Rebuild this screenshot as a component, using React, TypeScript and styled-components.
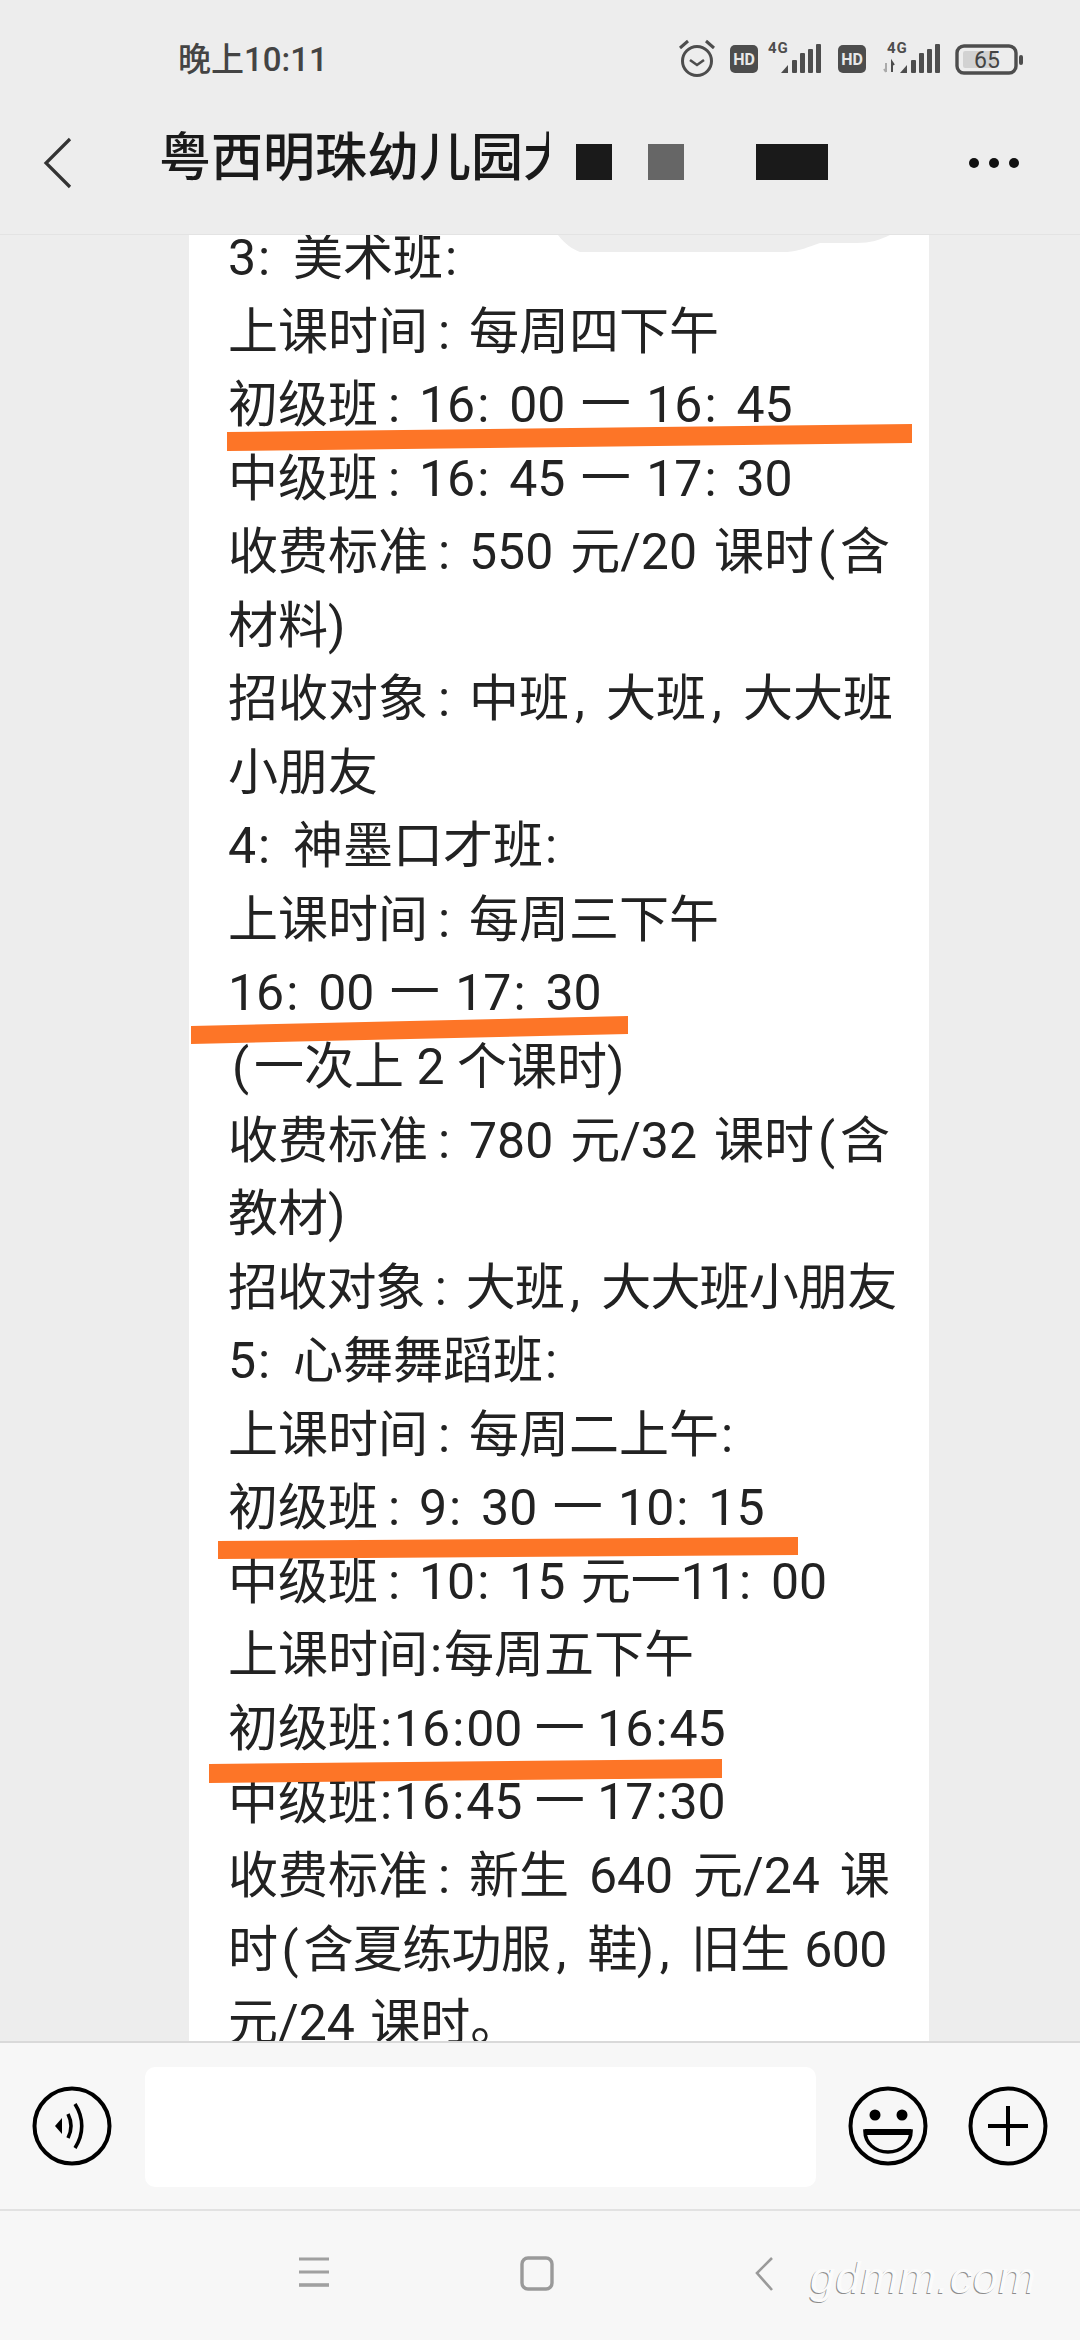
import styled, { createGlobalStyle } from 'styled-components';

const GlobalStyle = createGlobalStyle`
  html, body {
    margin: 0;
    padding: 0;
    background: #ededed;
  }
  * {
    box-sizing: border-box;
  }
`;

const Screen = styled.div`
  width: 1080px;
  height: 2340px;
  display: flex;
  flex-direction: column;
  background: #ededed;
  overflow: hidden;
  font-family: Roboto, 'Noto Sans CJK SC', sans-serif;
`;

const Top = styled.header`
  height: 235px;
  flex: none;
  border-bottom: 1px solid #e3e3e3;
  background: #ededed;
`;

const StatusBar = styled.div`
  height: 122px;
  padding: 38px 55px 0 178px;
  display: flex;
  justify-content: space-between;
`;

const Time = styled.div`
  font-size: 33px;
  line-height: 44px;
  font-weight: 500;
  color: #444;
`;

const StatusIcons = styled.div`
  display: flex;
  align-items: flex-start;
  height: 48px;
`;

const Slot = styled.div<{ $gap?: number; $top?: number }>`
  display: flex;
  margin-left: ${({ $gap }) => $gap ?? 0}px;
  margin-top: ${({ $top }) => $top ?? 0}px;
`;

const TitleBar = styled.div`
  height: 112px;
  padding: 0 61px 0 42px;
  display: flex;
  align-items: flex-start;
`;

const BackIcon = styled.svg`
  flex: none;
  margin-top: 14px;
`;

const MoreIcon = styled.svg`
  flex: none;
  margin-top: 35px;
`;

const Title = styled.h1`
  margin: 3px 0 0 85px;
  width: 390px;
  height: 72px;
  overflow: hidden;
  white-space: nowrap;
  font-size: 52px;
  line-height: 68px;
  font-weight: 500;
  color: #1a1a1a;
`;

const Redactions = styled.div`
  margin: 22px 0 0 27px;
  display: flex;
  flex: 1;
`;

const Redaction = styled.span<{ $w: number; $gap: number; $grey?: boolean }>`
  width: ${({ $w }) => $w}px;
  height: 36px;
  margin-right: ${({ $gap }) => $gap}px;
  background: ${({ $grey }) => ($grey ? '#666' : '#1a1a1a')};
`;

const Content = styled.main`
  position: relative;
  flex: 1;
  min-height: 0;
  overflow: hidden;
`;

const Sheet = styled.section`
  width: 740px;
  height: 100%;
  margin-left: 189px;
  padding-left: 39px;
  background: #fff;
  overflow: hidden;
`;

const Lines = styled.div`
  margin-top: -13px;
`;

const Line = styled.div<{ $word?: number; $letter?: number }>`
  height: 73.55px;
  line-height: 73.55px;
  font-size: 50px;
  word-spacing: ${({ $word }) => $word ?? 3}px;
  letter-spacing: ${({ $letter }) => $letter ?? 0}px;
  color: #222;
  white-space: nowrap;
`;

// the source text sets its punctuation wider than the font does
const Punct = styled.span<{ $w: number; $pad: number }>`
  display: inline-block;
  width: ${({ $w }) => $w}px;
  padding-left: ${({ $pad }) => $pad}px;
`;

const Overlay = styled.svg`
  position: absolute;
  left: 0;
  top: 0;
  pointer-events: none;
`;

const Composer = styled.div`
  height: 170px;
  flex: none;
  padding: 24px 32px 0 32px;
  display: flex;
  align-items: flex-start;
  background: #f7f7f7;
  border-top: 2px solid #d9d9d9;
  border-bottom: 2px solid #e2e2e2;
`;

const RoundIcon = styled.svg<{ $gap?: number }>`
  flex: none;
  margin-top: 19px;
  margin-left: ${({ $gap }) => $gap ?? 0}px;
`;

const Input = styled.div`
  width: 671px;
  height: 120px;
  margin-left: 33px;
  background: #fff;
  border-radius: 10px;
`;

const NavBar = styled.nav`
  position: relative;
  height: 129px;
  flex: none;
  background: #f7f7f7;
  display: flex;
  align-items: flex-start;
  padding: 45px 0 0 297px;
`;

const Watermark = styled.div`
  position: absolute;
  left: 810px;
  top: 39px;
  font-family: 'Liberation Sans', sans-serif;
  font-style: italic;
  font-size: 45px;
  line-height: 56px;
  letter-spacing: 0.5px;
  color: #fbfbfb;
  text-shadow: -1px 1px 0 #8d8d8d;
`;

const NavIcon = styled.svg<{ $gap?: number }>`
  flex: none;
  margin-left: ${({ $gap }) => $gap ?? 0}px;
`;

const textLines: { text: string; word?: number; letter?: number }[] = [
  { text: '3：美术班:' },
  { text: '上课时间：每周四下午' },
  { text: '初级班：16：00 一 16：45' },
  { text: '中级班：16：45 一 17：30' },
  { text: '收费标准：550 元/20 课时(含', word: 4.5 },
  { text: '材料)' },
  { text: '招收对象：中班，大班，大大班' },
  { text: '小朋友' },
  { text: '4：神墨口才班:' },
  { text: '上课时间：每周三下午' },
  { text: '16：00 一 17：30' },
  { text: '(一次上 2 个课时)', word: 0 },
  { text: '收费标准：780 元/32 课时(含', word: 4.5 },
  { text: '教材)' },
  { text: '招收对象：大班，大大班小朋友', letter: -0.8 },
  { text: '5：心舞舞蹈班:' },
  { text: '上课时间：每周二上午:' },
  { text: '初级班：9：30 一 10：15' },
  { text: '中级班：10：15 元一11：00' },
  { text: '上课时间:每周五下午' },
  { text: '初级班:16:00 一 16:45', word: 0 },
  { text: '中级班:16:45 一 17:30', word: 0 },
  { text: '收费标准：新生 640 元/24 课', word: 7.5 },
  { text: '时(含夏练功服，鞋)，旧生 600', letter: -0.6 },
  { text: '元/24 课时。' },
];

// orange marker strokes, in coordinates of the content area (y - 235)
const strokes = [
  '227,197 912,189 912,208 227,216',
  '191,791 628,781 628,799 191,809',
  '218,1306 798,1302 798,1320 218,1324',
  '209,1529 722,1524 722,1543 209,1548',
];

const renderLine = (line: string) =>
  line.split(/([：，:(])/).map((part, i, parts) => {
    if (part === '：') {
      const afterDigit = /\d$/.test(parts[i - 1]);
      const beforeDigit = /^\d/.test(parts[i + 1]);
      const width = afterDigit ? (beforeDigit ? 34 : 37) : 41;
      return (
        <Punct key={i} $w={width} $pad={afterDigit ? 2 : 10}>
          :
        </Punct>
      );
    }
    if (part === '，') {
      return (
        <Punct key={i} $w={37} $pad={6}>
          ,
        </Punct>
      );
    }
    if (part === ':') {
      return (
        <Punct key={i} $w={16} $pad={2}>
          :
        </Punct>
      );
    }
    if (part === '(') {
      return (
        <Punct key={i} $w={26} $pad={4}>
          (
        </Punct>
      );
    }
    return part;
  });

const Alarm = () => (
  <svg width="44" height="40" viewBox="0 0 44 40" fill="none" stroke="#4d4d4d">
    <circle cx="22" cy="23" r="14.5" strokeWidth="3" />
    <path d="M15 22l7 5 7-5" strokeWidth="2.6" />
    <path d="M5 10l8-7M39 10l-8-7" strokeWidth="3" />
  </svg>
);

const HdBadge = () => (
  <svg width="28" height="28" viewBox="0 0 28 28">
    <rect width="28" height="28" rx="5" fill="#4d4d4d" />
    <text x="14" y="20" textAnchor="middle" fontFamily="Roboto" fontWeight="700" fontSize="16" fill="#e8e8e8">
      HD
    </text>
  </svg>
);

const Signal = ({ arrows }: { arrows?: boolean }) => (
  <svg width={arrows ? 58 : 54} height="40" viewBox={arrows ? '0 0 58 40' : '0 0 54 40'}>
    <text
      x={arrows ? 4 : 0}
      y="15"
      fontFamily="Roboto"
      fontWeight="700"
      fontSize="15"
      letterSpacing="1"
      fill="#4d4d4d"
    >
      4G
    </text>
    {arrows && (
      <g fill="none" strokeWidth="2">
        <path d="M3 25v9M1 31l2 3" stroke="#aaa" />
        <path d="M9 34v-10l2 3" stroke="#4d4d4d" />
      </g>
    )}
    <g fill="#4d4d4d" transform={arrows ? 'translate(4 0)' : undefined}>
      <path d="M13 35l7-8v8z" />
      <rect x="24" y="22" width="5" height="13" rx="1" />
      <rect x="32" y="15" width="5" height="20" rx="1" />
      <rect x="40" y="11" width="5" height="24" rx="1" />
      <rect x="48" y="6" width="5" height="29" rx="1" />
    </g>
  </svg>
);

const Battery = () => (
  <svg width="70" height="32" viewBox="0 0 70 32">
    <rect x="2" y="2" width="59" height="27" rx="7" fill="none" stroke="#4d4d4d" strokeWidth="3.4" />
    <rect x="8" y="7" width="33" height="17" rx="2" fill="#d2d2d2" />
    <rect x="64" y="11" width="4" height="10" rx="2" fill="#4d4d4d" />
    <text x="32" y="24" textAnchor="middle" fontFamily="Roboto" fontSize="23" fill="#444">
      65
    </text>
  </svg>
);

export default function App() {
  return (
    <Screen>
      <GlobalStyle />
      <Top>
        <StatusBar>
          <Time>晚上10:11</Time>
          <StatusIcons>
            <Slot>
              <Alarm />
            </Slot>
            <Slot $gap={11} $top={7}>
              <HdBadge />
            </Slot>
            <Slot $gap={10}>
              <Signal />
            </Slot>
            <Slot $gap={16} $top={7}>
              <HdBadge />
            </Slot>
            <Slot $gap={17}>
              <Signal arrows />
            </Slot>
            <Slot $gap={14} $top={6}>
              <Battery />
            </Slot>
          </StatusIcons>
        </StatusBar>
        <TitleBar>
          <BackIcon width="32" height="54" viewBox="0 0 32 54" fill="none" stroke="#333" strokeWidth="3.2">
            <path d="M28 3L4 27l24 24" />
          </BackIcon>
          <Title>粤西明珠幼儿园大</Title>
          <Redactions>
            <Redaction $w={36} $gap={36} />
            <Redaction $w={36} $gap={72} $grey />
            <Redaction $w={72} $gap={0} />
          </Redactions>
          <MoreIcon width="50" height="12" viewBox="0 0 50 12" fill="#111">
            <circle cx="5" cy="6" r="5" />
            <circle cx="25" cy="6" r="5" />
            <circle cx="45" cy="6" r="5" />
          </MoreIcon>
        </TitleBar>
      </Top>
      <Content>
        <Sheet>
          <Lines>
            {textLines.map((line, i) => (
              <Line key={i} $word={line.word} $letter={line.letter}>
                {renderLine(line.text)}
              </Line>
            ))}
          </Lines>
        </Sheet>
        <Overlay width="1080" height="1805" viewBox="0 0 1080 1805">
          <path d="M558 0C565 9 572 14 580 17H787C800 16 808 12 820 8H857C870 8 880 5 890 0Z" fill="#ededed" />
          {strokes.map((points) => (
            <polygon key={points} points={points} fill="#fd7527" />
          ))}
        </Overlay>
      </Content>
      <Composer>
        <RoundIcon width="80" height="80" viewBox="0 0 80 80" fill="none" stroke="#000">
          <circle cx="40" cy="40" r="37.5" strokeWidth="4" />
          <path d="M23 40l7-8v16z" fill="#000" stroke="none" />
          <path d="M36 28c4 8 4 16 0 24" strokeWidth="3.6" />
          <path d="M43 18c9 14 9 30 0 44" strokeWidth="3.6" />
        </RoundIcon>
        <Input />
        <RoundIcon $gap={32} width="80" height="80" viewBox="0 0 80 80" fill="none" stroke="#000">
          <circle cx="40" cy="40" r="37.5" strokeWidth="4" />
          <circle cx="27" cy="29" r="5.5" fill="#000" stroke="none" />
          <circle cx="54" cy="29" r="5.5" fill="#000" stroke="none" />
          <path d="M17 45h46c0 12-10 21-23 21S17 57 17 45z" strokeWidth="3.6" />
          <path d="M17 46h46" strokeWidth="6" />
        </RoundIcon>
        <RoundIcon $gap={40} width="80" height="80" viewBox="0 0 80 80" fill="none" stroke="#000">
          <circle cx="40" cy="40" r="37.5" strokeWidth="4" />
          <path d="M20 40h40M40 20v40" strokeWidth="4" />
        </RoundIcon>
      </Composer>
      <NavBar>
        <NavIcon width="34" height="34" viewBox="0 0 34 34" stroke="#a0a0a0" strokeWidth="3">
          <path d="M2 3h30M2 16h30" />
          <path d="M2 29h30" strokeWidth="3.6" />
        </NavIcon>
        <NavIcon $gap={188} width="36" height="36" viewBox="0 0 36 36" fill="none" stroke="#9a9a9a" strokeWidth="3.4">
          <rect x="3" y="2" width="30" height="31" rx="6" />
        </NavIcon>
        <NavIcon $gap={198} width="22" height="36" viewBox="0 0 22 36" fill="none" stroke="#9a9a9a" strokeWidth="2.6">
          <path d="M19 2L4 17l15 17" />
        </NavIcon>
        <Watermark>gdmm.com</Watermark>
      </NavBar>
    </Screen>
  );
}
